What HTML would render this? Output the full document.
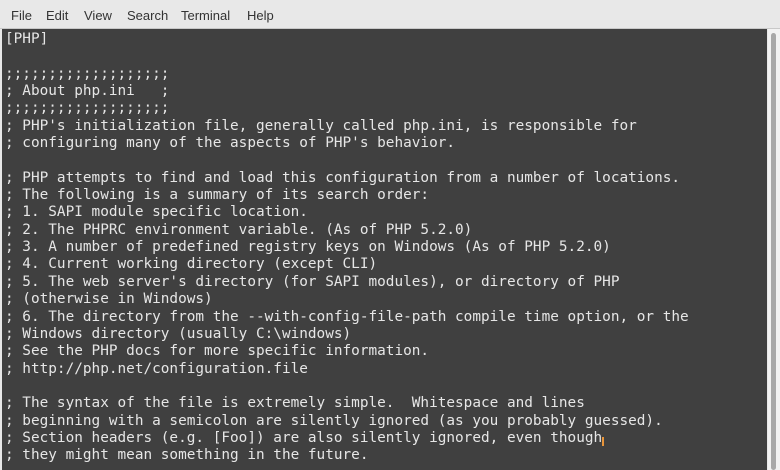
<!DOCTYPE html><html><head><style>
body{margin:0;width:780px;height:470px;background:#e8e8e8;overflow:hidden;position:relative;font-family:"Liberation Sans",sans-serif}
.menu{position:absolute;top:0;left:0;width:780px;height:29px;background:#e8e8e8;border-bottom:1px solid #c8c8c8;box-sizing:border-box}
.menu span{position:absolute;top:8px;font-size:13px;color:#333}
.term{position:absolute;left:2px;top:29px;width:765px;height:441px;background:#404040}
pre{margin:0;position:absolute;left:3px;top:2px;font-family:"DejaVu Sans Mono","Liberation Mono",monospace;font-size:14.38px;line-height:17.35px;color:#e6e6e6}
.sb{position:absolute;left:768px;top:29px;width:12px;height:441px;background:#f2f2f2}
.th{position:absolute;left:771px;top:33px;width:5px;height:437px;background:#a8a8a8;border-radius:3px}
.cur{position:absolute;left:602px;top:437px;width:2px;height:9px;background:#e8953a}
</style></head><body>
<div class="menu"><span style="left:11px">File</span><span style="left:46px">Edit</span><span style="left:84px">View</span><span style="left:127px">Search</span><span style="left:181px">Terminal</span><span style="left:247px">Help</span></div>
<div class="term"><pre>[PHP]

;;;;;;;;;;;;;;;;;;;
; About php.ini   ;
;;;;;;;;;;;;;;;;;;;
; PHP's initialization file, generally called php.ini, is responsible for
; configuring many of the aspects of PHP's behavior.

; PHP attempts to find and load this configuration from a number of locations.
; The following is a summary of its search order:
; 1. SAPI module specific location.
; 2. The PHPRC environment variable. (As of PHP 5.2.0)
; 3. A number of predefined registry keys on Windows (As of PHP 5.2.0)
; 4. Current working directory (except CLI)
; 5. The web server's directory (for SAPI modules), or directory of PHP
; (otherwise in Windows)
; 6. The directory from the --with-config-file-path compile time option, or the
; Windows directory (usually C:\windows)
; See the PHP docs for more specific information.
; http://php.net/configuration.file

; The syntax of the file is extremely simple.  Whitespace and lines
; beginning with a semicolon are silently ignored (as you probably guessed).
; Section headers (e.g. [Foo]) are also silently ignored, even though
; they might mean something in the future.</pre></div>
<div class="cur"></div>
<div class="sb"></div><div class="th"></div>
</body></html>
